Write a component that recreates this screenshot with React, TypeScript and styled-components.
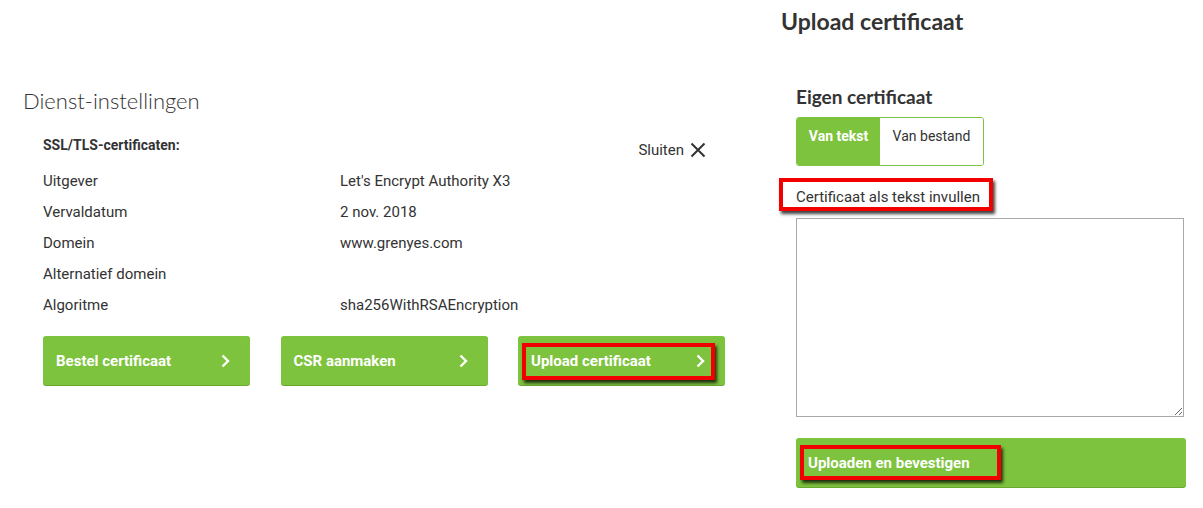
import styled, { createGlobalStyle, css } from 'styled-components'

const green = '#7dc33d'

const GlobalStyle = createGlobalStyle`
  body {
    margin: 0;
    background: #fff;
    font-family: Roboto, 'Liberation Sans', sans-serif;
    color: #333;
  }
`

const rows = [
  { label: 'Uitgever', value: "Let's Encrypt Authority X3" },
  { label: 'Vervaldatum', value: '2 nov. 2018' },
  { label: 'Domein', value: 'www.grenyes.com' },
  { label: 'Alternatief domein', value: '' },
  { label: 'Algoritme', value: 'sha256WithRSAEncryption' },
]

const Chevron = () => (
  <svg width="10" height="14" viewBox="0 0 10 14" fill="none">
    <path d="M2.5 1.5 L8 7 L2.5 12.5" stroke="#fff" strokeWidth="2.4" />
  </svg>
)

const CloseIcon = () => (
  <svg width="16" height="16" viewBox="0 0 16 16">
    <path d="M1.5 1.5 L14.5 14.5 M14.5 1.5 L1.5 14.5" stroke="#333" strokeWidth="2" />
  </svg>
)

export default function App() {
  return (
    <>
      <GlobalStyle />
      <Page>
        <ServicePanel>
          <PanelTitle>Dienst-instellingen</PanelTitle>
          <CertBlock>
            <CertHeader>
              <CertTitle>SSL/TLS-certificaten:</CertTitle>
              <CloseLink>
                Sluiten <CloseIcon />
              </CloseLink>
            </CertHeader>
            <InfoTable>
              {rows.map((row) => (
                <InfoRow key={row.label}>
                  <span>{row.label}</span>
                  <span>{row.value}</span>
                </InfoRow>
              ))}
            </InfoTable>
            <ButtonRow>
              <ActionButton>
                Bestel certificaat <Chevron />
              </ActionButton>
              <ActionButton>
                CSR aanmaken <Chevron />
              </ActionButton>
              <ActionButton>
                Upload certificaat <Chevron />
                <Marker $top={7} $left={4} $right={10} $bottom={5} />
              </ActionButton>
            </ButtonRow>
          </CertBlock>
        </ServicePanel>

        <UploadPanel>
          <UploadTitle>Upload certificaat</UploadTitle>
          <UploadBody>
            <SubTitle>Eigen certificaat</SubTitle>
            <Tabs>
              <Tab $active>Van tekst</Tab>
              <Tab>Van bestand</Tab>
            </Tabs>
            <FieldLabel>
              Certificaat als tekst invullen
              <Marker $top={-9} $left={-17} $right={-13} $bottom={-4} />
            </FieldLabel>
            <CertText />
            <SubmitButton>
              Uploaden en bevestigen
              <Marker $top={7} $left={4} $width={201} $bottom={7} />
            </SubmitButton>
          </UploadBody>
        </UploadPanel>
      </Page>
    </>
  )
}

const Page = styled.div`
  display: flex;
  width: 1203px;
  height: 508px;
  overflow: hidden;
`

const ServicePanel = styled.section`
  width: 758px;
  padding: 88px 0 0 23px;
  box-sizing: border-box;
`

const PanelTitle = styled.h2`
  margin: 0;
  font-family: Lato, 'Open Sans', sans-serif;
  font-weight: 300;
  font-size: 22px;
  line-height: 26px;
  color: #333;
`

const CertBlock = styled.div`
  width: 682px;
  padding: 21px 0 0 20px;
`

const CertHeader = styled.div`
  display: flex;
  justify-content: space-between;
  align-items: flex-start;
  height: 20px;
  padding-right: 19px;
  margin-bottom: 11px;
`

const CertTitle = styled.div`
  font-weight: 700;
  font-size: 14px;
  line-height: 20px;
`

const CloseLink = styled.div`
  display: flex;
  align-items: center;
  gap: 6px;
  padding-top: 5px;
  font-size: 15px;
  line-height: 20px;
  svg {
    margin-top: -1px;
  }
`

const InfoTable = styled.div`
  display: flex;
  flex-direction: column;
`

const InfoRow = styled.div`
  display: grid;
  grid-template-columns: 297px 1fr;
  font-size: 15px;
  line-height: 31px;
`

const ButtonRow = styled.div`
  display: grid;
  grid-template-columns: repeat(3, 207px);
  justify-content: space-between;
  margin-top: 15px;
`

const buttonBase = css`
  position: relative;
  display: flex;
  align-items: center;
  height: 49px;
  box-sizing: border-box;
  padding: 0 13px;
  border-radius: 3px;
  background: ${green};
  box-shadow: 0 1px 0 #6aa832;
  color: #fff;
  font-family: Roboto, 'Liberation Sans', sans-serif;
  font-weight: 700;
  font-size: 15px;
`

const ActionButton = styled.div`
  ${buttonBase}
  justify-content: space-between;
  padding-right: 20px;
`

const Marker = styled.span<{
  $top: number
  $left: number
  $right?: number
  $bottom: number
  $width?: number
}>`
  position: absolute;
  top: ${(p) => p.$top}px;
  left: ${(p) => p.$left}px;
  bottom: ${(p) => p.$bottom}px;
  ${(p) => (p.$width ? `width: ${p.$width}px;` : `right: ${p.$right}px;`)}
  box-sizing: border-box;
  border: 4px solid #f20000;
  box-shadow: 2px 3px 3px rgba(0, 0, 0, 0.75);
  pointer-events: none;
`

const UploadPanel = styled.section`
  flex: 1;
  padding: 6px 0 0 23px;
`

const UploadTitle = styled.h1`
  margin: 0;
  font-family: Lato, 'Open Sans', sans-serif;
  font-weight: 700;
  font-size: 23px;
  line-height: 30px;
  color: #333;
`

const UploadBody = styled.div`
  width: 390px;
  padding: 49px 0 0 15px;
`

const SubTitle = styled.h3`
  margin: 0 0 8px;
  font-family: Lato, 'Open Sans', sans-serif;
  font-weight: 700;
  font-size: 19px;
  line-height: 24px;
  color: #333;
`

const Tabs = styled.div`
  display: flex;
  width: 188px;
  height: 49px;
  box-sizing: border-box;
  border: 1px solid ${green};
  border-radius: 3px;
  overflow: hidden;
`

const Tab = styled.div<{ $active?: boolean }>`
  padding: 9px 0 0;
  font-size: 14px;
  line-height: 18px;
  white-space: nowrap;
  text-align: center;
  font-weight: ${(p) => (p.$active ? 700 : 400)};
  color: ${(p) => (p.$active ? '#fff' : '#333')};
  background: ${(p) => (p.$active ? green : '#fff')};
  width: ${(p) => (p.$active ? '83px' : 'auto')};
  flex: ${(p) => (p.$active ? 'none' : '1')};
`

const FieldLabel = styled.div`
  position: relative;
  width: fit-content;
  margin-top: 21px;
  font-size: 15px;
  line-height: 20px;
`

const CertText = styled.textarea`
  display: block;
  width: 388px;
  height: 199px;
  margin-top: 11px;
  box-sizing: border-box;
  border: 1px solid #aaa;
  resize: vertical;
`

const SubmitButton = styled.div`
  ${buttonBase}
  width: 390px;
  margin-top: 21px;
  padding-left: 12px;
`
